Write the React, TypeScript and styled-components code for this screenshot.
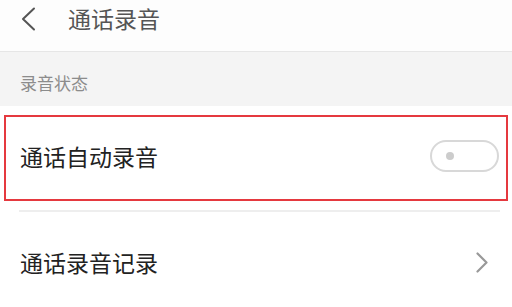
import styled, { createGlobalStyle } from 'styled-components';

const GlobalStyle = createGlobalStyle`
  html, body {
    margin: 0;
    padding: 0;
    background: #ffffff;
    font-family: "Noto Sans CJK SC", "Noto Sans", sans-serif;
  }
`;

const App = () => {
  return (
    <>
      <GlobalStyle />
      <Page>
        <Header>
          <BackButton>
            <svg width="16" height="24" viewBox="0 0 16 24" fill="none">
              <path d="M14 1.5 L3 12 L14 22.5" stroke="#555" strokeWidth="2" strokeLinecap="round" strokeLinejoin="round" />
            </svg>
          </BackButton>
          <Title>通话录音</Title>
        </Header>
        <SectionLabel>录音状态</SectionLabel>
        <Highlight>
          <Row>
            <RowText>通话自动录音</RowText>
            <Toggle>
              <span className="__dot" />
            </Toggle>
          </Row>
        </Highlight>
        <Divider />
        <Row tall>
          <RowText>通话录音记录</RowText>
          <svg width="12" height="21" viewBox="0 0 12 21" fill="none">
            <path d="M1.5 1.5 L10.5 10.5 L1.5 19.5" stroke="#999" strokeWidth="2.2" strokeLinecap="round" strokeLinejoin="round" />
          </svg>
        </Row>
      </Page>
    </>
  );
};

const Page = styled.div`
  width: 512px;
  height: 307px;
  overflow: hidden;
  background: #fff;
`;

const Header = styled.header`
  display: flex;
  align-items: center;
  height: 52px;
  box-sizing: border-box;
  padding: 0 0 14px 20px;
  background: #fdfdfd;
  border-bottom: 1px solid #e6e6e6;
`;

const BackButton = styled.div`
  display: flex;
  width: 48px;
`;

const Title = styled.h1`
  margin: 0;
  font-size: 23px;
  font-weight: 400;
  color: #555;
  line-height: 1;
`;

const SectionLabel = styled.div`
  display: flex;
  align-items: center;
  height: 54px;
  box-sizing: border-box;
  padding: 6px 0 0 20px;
  background: #f4f4f4;
  font-size: 17px;
  color: #8c8c8c;
`;

const Highlight = styled.div`
  margin: 9px 4px 0 4px;
  border: 2px solid #e5393f;
`;

const Row = styled.div<{ tall?: boolean }>`
  display: flex;
  align-items: center;
  justify-content: space-between;
  height: ${(p) => (p.tall ? '100px' : '82px')};
  padding: ${(p) => (p.tall ? '0 24px 0 20px' : '0 7px 0 14px')};
  padding-bottom: ${(p) => (p.tall ? '0' : '4px')};
  box-sizing: border-box;
`;

const RowText = styled.span`
  font-size: 23px;
  color: #222;
  line-height: 1;
`;

const Toggle = styled.div`
  position: relative;
  width: 69px;
  height: 32px;
  box-sizing: border-box;
  border: 2px solid #d8d8d8;
  border-radius: 16px;
  background: #fff;
  .__dot {
    position: absolute;
    left: 14px;
    top: 10px;
    width: 8px;
    height: 8px;
    border-radius: 50%;
    background: #cccccc;
  }
`;

const Divider = styled.div`
  height: 2px;
  margin: 9px 12px 0 19px;
  background: #eeeeee;
`;

export default App;
